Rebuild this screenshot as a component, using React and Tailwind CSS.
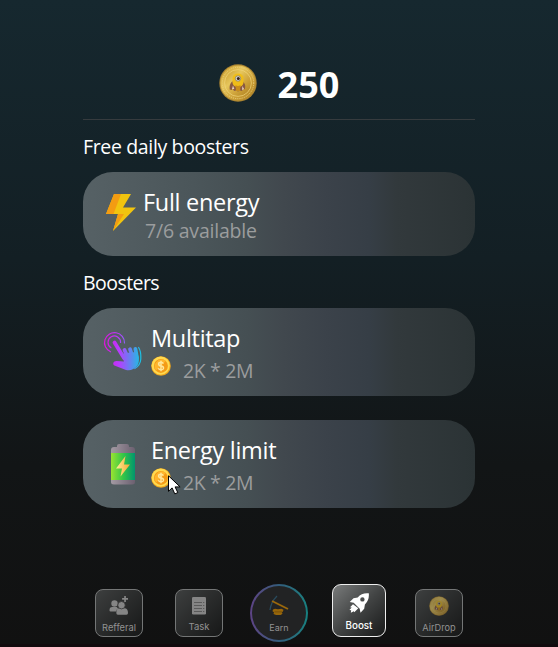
function MascotCoin({ className }) {
  return (
    <svg viewBox="0 0 38 38" className={className}>
      <defs>
        <linearGradient id="gold" x1="0" y1="0" x2="1" y2="1">
          <stop offset="0" stopColor="#c99b2b" />
          <stop offset=".35" stopColor="#e6c65c" />
          <stop offset=".65" stopColor="#cda138" />
          <stop offset="1" stopColor="#a97c1e" />
        </linearGradient>
      </defs>
      <circle cx="19" cy="19" r="18.7" fill="#aa8431" />
      <circle cx="19" cy="19" r="17.6" fill="url(#gold)" />
      <circle cx="19" cy="19" r="15.7" fill="none" stroke="#ecd384" strokeWidth="1" strokeDasharray="1 1.2" />
      <circle cx="19" cy="19" r="13.4" fill="url(#gold)" stroke="#f0d67b" strokeWidth=".7" />
      <path d="M13 17.500q-3 3-2.300 8l2 .5 1-1.500 1.300 2.500 2-.5 2 1 2-1 2 .5 1.300-2.500 1.500 1q1.500-5-1.800-8z" fill="#8a5a42" />
      <path d="M13 25l1-3.500 1.300 3.500zm10.500-3l1.500 3-2 1z" fill="#e7cfc5" />
      <path d="M13.500 15q0-5.500 5.500-5.500t5.500 5.500v4q-1 4-5.500 4t-5.500-4z" fill="#efbd19" />
      <path d="M16.500 21q2.500 2 5 0l-.5 6h-4z" fill="#c98c1b" />
      <circle cx="19" cy="14.500" r="2.700" fill="#d9d8d6" stroke="#80745c" strokeWidth=".7" />
      <circle cx="19.300" cy="14.500" r="1.500" fill="#39251b" />
    </svg>
  );
}

function DollarCoin() {
  return (
    <svg viewBox="0 0 20 20" className="size-5">
      <circle cx="10" cy="10" r="9.800" fill="#f0a51a" />
      <circle cx="9.700" cy="9.600" r="9.100" fill="#ffda50" />
      <circle cx="9.900" cy="9.900" r="7" fill="#f49b17" />
      <path d="M5 14.800A7 7 0 0 1 14.800 5z" fill="#ffb52d" />
      <path d="M12.400 7.700Q11.700 6.300 9.900 6.300 7.600 6.300 7.600 8T10 9.900t2.500 2-2.500 1.800q-2 0-2.700-1.500M10 4.800v10.400" fill="none" stroke="#ffe69a" strokeWidth="1.500" />
    </svg>
  );
}

function Bolt() {
  return (
    <svg viewBox="0 0 30 38" className="h-[38px] w-[30px] shrink-0">
      <path d="M8 0h17L17 13.500h13L7 37l5-17H0z" fill="#f1c40f" />
      <path d="M8 0h7L7.500 20H0zM12 20h6L7 37z" fill="#f39c12" />
    </svg>
  );
}

function TapHand() {
  return (
    <svg viewBox="0 0 40 42" className="h-[42px] w-10 shrink-0">
      <defs>
        <linearGradient id="tap" x1="0" y1="0" x2="40" y2="0" gradientUnits="userSpaceOnUse">
          <stop stopColor="#df12d8" />
          <stop offset=".4" stopColor="#b83cff" />
          <stop offset=".9" stopColor="#24b9e4" />
          <stop offset="1" stopColor="#10c9e4" />
        </linearGradient>
      </defs>
      <g fill="none" stroke="url(#tap)" strokeWidth="1.200" strokeLinecap="round">
        <path d="M7.500 20.800A10 10 0 1 1 21.500 12" />
        <path d="M8 16.700A6.300 6.300 0 1 1 17.600 11.500" />
        <path d="M35.600 16.500q2.600 3.500 2.200 11.500-.5 6.500-6 9.500" />
      </g>
      <g fill="none" stroke="url(#tap)" strokeWidth="3.800" strokeLinecap="round">
        <path d="M11.500 11.500L21 27M21.500 19L25 27M27 18.200L30 27M32.400 17.800L34 27" />
      </g>
      <path d="M18.300 23.500L22 22l12-1q3.500 8.500.5 13.200Q29.500 40.500 23 39L12 34.700c-3.200-1.300-1.600-4.800 1.500-4.700l7.500.5z" fill="url(#tap)" />
    </svg>
  );
}

function Battery() {
  return (
    <svg viewBox="0 0 24 41" className="h-[41px] w-6 shrink-0">
      <defs>
        <linearGradient id="cell">
          <stop stopColor="#9ae331" />
          <stop offset=".5" stopColor="#35c747" />
          <stop offset="1" stopColor="#00966e" />
        </linearGradient>
        <linearGradient id="cap">
          <stop stopColor="#a39aa3" />
          <stop offset="1" stopColor="#6c6070" />
        </linearGradient>
        <linearGradient id="spark">
          <stop stopColor="#fff096" />
          <stop offset="1" stopColor="#f5a634" />
        </linearGradient>
      </defs>
      <path d="M6 5V2q0-2 2-2h8q2 0 2 2v3zM0 9V6q0-3 3-3h18q3 0 3 3v3zM0 35h24v3q0 2.500-3 2.500H3Q0 40.500 0 38z" fill="url(#cap)" />
      <path d="M0 9h24v27H0z" fill="url(#cell)" />
      <path d="M14.500 12L5 24.500h6L9.500 32.500 19 20.500h-6z" fill="url(#spark)" />
    </svg>
  );
}

function ReferralIcon() {
  return (
    <svg viewBox="0 0 20 20" className="size-5" fill="#858585">
      <circle cx="5.500" cy="7.500" r="3.200" />
      <path d="M.5 14.500V14q0-3 2.800-3h4.500L9 12.500q-1.600 1-2 3H1.500Q.5 15.500.5 14.500zM7.300 17q0-4.700 3.200-4.700h5q3.500 0 3.500 4.700 0 1.800-1.500 1.800H8.800q-1.500 0-1.500-1.800z" />
      <circle cx="12.500" cy="9.200" r="3.700" stroke="#333" strokeWidth=".8" />
      <path d="M15.200 0h1.700v2.100H19v1.700h-2.100v2.100h-1.700V3.800h-2.100V2.100h2.100z" />
    </svg>
  );
}

function TaskIcon() {
  return (
    <svg viewBox="0 0 14 18" className="h-[18px] w-3.5">
      <rect width="14" height="17.500" rx="1.300" fill="#858585" />
      <path d="M2 5.500h8M2 8.500h8M2 11.500h8M2 14.500h8M11 5.500h1.300M11 8.500h1.300M11 11.500h1.300M11 14.500h1.300" stroke="#555" strokeWidth=".9" />
    </svg>
  );
}

function PickaxeIcon() {
  return (
    <svg viewBox="0 0 20 21" className="h-[21px] w-5">
      <path d="M1 15Q2 7 8 1" fill="none" stroke="#294a5d" strokeWidth="1.300" />
      <path d="M3 6L19 14" stroke="#9a680c" strokeWidth="1.900" />
      <path d="M4 14.500l2-.8 3 .6 3.500-.6 2 1-.7 2-1 .6.700 1.500-1.800 1.200H7L4.500 19l.5-1.800-1.500-1z" fill="#97660a" />
      <path d="M5.500 16.900h8" stroke="#68460b" strokeWidth=".7" />
    </svg>
  );
}

function RocketIcon() {
  return (
    <svg viewBox="0 0 20 20" className="size-5" fill="white">
      <path fillRule="evenodd" d="M19.800.3Q13-.5 8.700 4.400L4.500 5.300.7 9l4 .7 6 6 .8 4 3.700-3.900.7-4.200Q20.500 7 19.800.3zM13.400 4.200a2.200 2.200 0 1 1 0 4.400 2.200 2.200 0 0 1 0-4.400z" />
      <path d="M4 11.200L1 14.200l1.700.2L.4 17l1.800.2-.4 2.500 3-1.400.5 1 4-4z" />
    </svg>
  );
}

function BoosterText({ title }) {
  return (
    <div className="pt-[14px]">
      <div className="h-8 whitespace-nowrap text-[23.500px] leading-8 tracking-[-0.300px] text-white">{title}</div>
      <div className="flex h-[34px] gap-3">
        <div className="pt-0.5"><DollarCoin /></div>
        <div className="pt-[3px] text-[19.500px] leading-[27px] tracking-[-0.350px] text-[#9b9d9e]">2K * 2M</div>
      </div>
    </div>
  );
}

const card = "flex w-full rounded-[30px] bg-[linear-gradient(90deg,#566165_0%,#4b565a_28%,#454f53_42%,#41484e_51%,#3b424a_62%,#363e46_73%,#32393c_80%,#2b3335_100%)]";
const heading = "mt-3 h-10 whitespace-nowrap text-[19.500px] leading-[29px] text-white";
const tile = "flex size-12 flex-col items-center rounded-[8px] border border-[#747676] bg-linear-to-br from-[#3d3f3f] to-[#171818] text-[#929292]";

export default function App() {
  return (
    <main className="relative flex h-[647px] w-[558px] flex-col items-center overflow-hidden bg-[linear-gradient(180deg,#16282f_0%,#131f24_40%,#121516_72%,#111111_100%)] font-['Open_Sans','Noto_Sans',sans-serif]">
      <div className="flex w-[392px] flex-col">
        <header className="flex h-[120px] items-start justify-center gap-[21px] border-b border-[#363b3e] pt-16">
          <MascotCoin className="size-[38px]" />
          <span className="text-[36px] leading-[42px] font-bold text-white">250</span>
        </header>
        <h2 className={heading + " tracking-[-0.350px]"}>Free daily boosters</h2>
        <section className={card + " h-[84px] gap-[7px] pl-[23px]"}>
          <div className="pt-[22px]"><Bolt /></div>
          <div className="pt-[14px]">
            <div className="h-[31px] whitespace-nowrap text-[23.500px] leading-8 tracking-[-0.300px] text-white">Full energy</div>
            <div className="pl-[2px] text-[19.500px] leading-[27px] tracking-[-0.200px] text-[#9b9d9e]">7/6 available</div>
          </div>
        </section>
        <h2 className={heading + " tracking-[-0.550px]"}>Boosters</h2>
        <section className={card + " h-[88px] gap-2 pl-5"}>
          <div className="pt-[23px]"><TapHand /></div>
          <BoosterText title="Multitap" />
        </section>
        <section className={card + " mt-6 h-[88px] gap-4 pl-7"}>
          <div className="pt-6"><Battery /></div>
          <BoosterText title="Energy limit" />
        </section>
      </div>
      <nav className="mt-[76px] flex h-[58px] w-[368px] items-start font-['Inter',sans-serif] leading-3">
        <div className={tile + " mt-[5px] pt-[6px]"}>
          <ReferralIcon />
          <span className="mt-[6px] text-[9.300px]">Refferal</span>
        </div>
        <div className={tile + " mt-[5px] ml-8 pt-[7px]"}>
          <TaskIcon />
          <span className="mt-[6px] text-[9.500px]">Task</span>
        </div>
        <div className="ml-[27px] flex size-[58px] rounded-full bg-linear-to-r from-[#5d4385] via-[#315c7b] to-[#158180] p-[2px]">
          <div className="flex size-full flex-col items-center rounded-full bg-[#222324] pt-[9px] text-[#929292]">
            <PickaxeIcon />
            <span className="mt-[6px] text-[9px]">Earn</span>
          </div>
        </div>
        <div className="ml-6 flex h-[53px] w-[54px] flex-col items-center rounded-[9px] border-[1.500px] border-[#eeeeee] bg-linear-to-br from-[#7a7c7c] via-[#424444] to-[#191a1a] pt-[8px] text-white">
          <RocketIcon />
          <span className="mt-[7px] text-[9.800px] font-medium">Boost</span>
        </div>
        <div className={tile + " mt-[5px] ml-[29px] pt-[6px]"}>
          <MascotCoin className="size-5 opacity-60" />
          <span className="mt-[6px] text-[9.200px]">AirDrop</span>
        </div>
      </nav>
      <svg viewBox="0 0 13 20" className="absolute top-[475px] left-[168px] h-5 w-[13px]">
        <path d="M.5.8v15.500l3.600-3.400 2.700 6 3-1.300-2.700-5.700h5z" fill="white" stroke="black" />
      </svg>
      <div className="absolute bottom-0 left-0 h-[3px] w-full bg-[#120b0e]" />
    </main>
  );
}
